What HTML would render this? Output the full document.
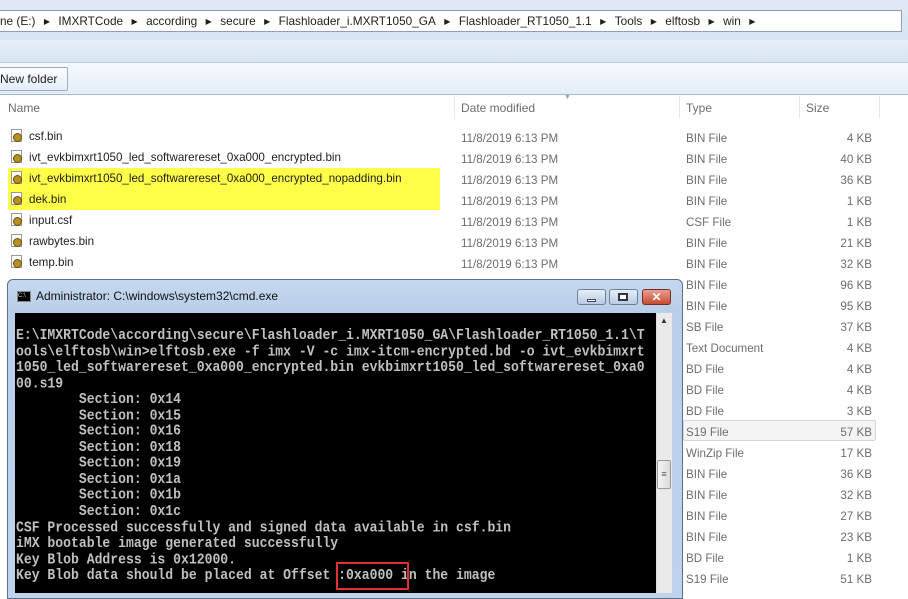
<!DOCTYPE html>
<html><head><meta charset="utf-8"><style>
*{margin:0;padding:0;box-sizing:border-box}
body{width:908px;height:589px;overflow:hidden;background:#fff;position:relative;font-family:"Liberation Sans",sans-serif;font-size:11.6px;color:#1e1e1e}
.a{position:absolute;white-space:nowrap}
.g{color:#6d6d6d}
.ic{position:absolute;width:11px;height:13px;border:1px solid #999;background:#fff}
.ic:after{content:"";position:absolute;left:1px;top:3px;width:7px;height:7px;border-radius:50%;background:#b89020;border:1px solid #6a5010}
.ar{display:inline-block;width:23px;text-align:center;font-size:8px;vertical-align:1px}
pre{font-family:"Liberation Mono",monospace;font-weight:bold;font-size:13.1px;line-height:16px;color:#c0c0c0;white-space:pre !important;transform:scaleY(1.1);transform-origin:0 0}
</style></head><body>
<div class="a" style="left:0;top:0;width:908px;height:62px;background:linear-gradient(#dfe9f5,#d5e2f1)"></div>
<div class="a" style="left:-2px;top:10px;width:904px;height:22px;background:#fff;border:1px solid #8e9fb5"></div>
<div class="a" style="left:0;top:14px;font-size:11.8px">ne (E:)<span class="ar">▶</span>IMXRTCode<span class="ar">▶</span>according<span class="ar">▶</span>secure<span class="ar">▶</span>Flashloader_i.MXRT1050_GA<span class="ar">▶</span>Flashloader_RT1050_1.1<span class="ar">▶</span>Tools<span class="ar">▶</span>elftosb<span class="ar">▶</span>win<span class="ar">▶</span></div>
<div class="a" style="left:0;top:40px;width:908px;height:23px;background:linear-gradient(#e6eef8,#d8e4f2);border-bottom:1px solid #bccbdd"></div>
<div class="a" style="left:0;top:63px;width:908px;height:32px;background:linear-gradient(#f6f9fd,#e3ecf7);border-bottom:1px solid #a8b9cf"></div>
<div class="a" style="left:-4px;top:67px;width:72px;height:24px;border:1px solid #9fb0c6;border-radius:2px;background:linear-gradient(#fbfdff,#e4edf8)"></div>
<div class="a" style="left:0;top:72px;font-size:12px">New folder</div>
<div class="a g" style="left:8px;top:101px;font-size:12px">Name</div>
<div class="a" style="left:454px;top:96px;width:1px;height:22px;background:#e3e8ee"></div>
<div class="a g" style="left:461px;top:101px;font-size:12px">Date modified</div>
<div class="a" style="left:564px;top:94px;color:#8ab;font-size:7px">▼</div>
<div class="a" style="left:679px;top:96px;width:1px;height:22px;background:#e3e8ee"></div>
<div class="a g" style="left:686px;top:101px;font-size:12px">Type</div>
<div class="a" style="left:799px;top:96px;width:1px;height:22px;background:#e3e8ee"></div>
<div class="a g" style="left:806px;top:101px;font-size:12px">Size</div>
<div class="a" style="left:879px;top:96px;width:1px;height:22px;background:#e3e8ee"></div>
<div class="a" style="left:8px;top:168px;width:432px;height:42px;background:#ffff4a"></div>
<div class="a" style="left:683px;top:420px;width:193px;height:21px;border:1px solid #d6d6d6;border-radius:2px;background:#f4f4f4"></div>

<div class="ic" style="left:11px;top:129px"></div><div class="a" style="left:29px;top:130px">csf.bin</div>
<div class="ic" style="left:11px;top:150px"></div><div class="a" style="left:29px;top:151px">ivt_evkbimxrt1050_led_softwarereset_0xa000_encrypted.bin</div>
<div class="ic" style="left:11px;top:171px"></div><div class="a" style="left:29px;top:172px">ivt_evkbimxrt1050_led_softwarereset_0xa000_encrypted_nopadding.bin</div>
<div class="ic" style="left:11px;top:192px"></div><div class="a" style="left:29px;top:193px">dek.bin</div>
<div class="ic" style="left:11px;top:213px"></div><div class="a" style="left:29px;top:214px">input.csf</div>
<div class="ic" style="left:11px;top:234px"></div><div class="a" style="left:29px;top:235px">rawbytes.bin</div>
<div class="ic" style="left:11px;top:255px"></div><div class="a" style="left:29px;top:256px">temp.bin</div>

<div class="a g" style="left:461px;top:128px;line-height:21px">11/8/2019 6:13 PM<br>11/8/2019 6:13 PM<br>11/8/2019 6:13 PM<br>11/8/2019 6:13 PM<br>11/8/2019 6:13 PM<br>11/8/2019 6:13 PM<br>11/8/2019 6:13 PM</div>
<div class="a g" style="left:686px;top:128px;line-height:21px">BIN File<br>BIN File<br>BIN File<br>BIN File<br>CSF File<br>BIN File<br>BIN File<br>BIN File<br>BIN File<br>SB File<br>Text Document<br>BD File<br>BD File<br>BD File<br>S19 File<br>WinZip File<br>BIN File<br>BIN File<br>BIN File<br>BIN File<br>BD File<br>S19 File</div>
<div class="a g" style="left:800px;width:72px;text-align:right;top:128px;line-height:21px">4 KB<br>40 KB<br>36 KB<br>1 KB<br>1 KB<br>21 KB<br>32 KB<br>96 KB<br>95 KB<br>37 KB<br>4 KB<br>4 KB<br>4 KB<br>3 KB<br>57 KB<br>17 KB<br>36 KB<br>32 KB<br>27 KB<br>23 KB<br>1 KB<br>51 KB</div>

<!-- cmd window -->
<div class="a" style="left:7px;top:279px;width:676px;height:320px;border:1px solid #5a6f8a;border-radius:6px 6px 0 0;background:linear-gradient(#c5d8ee,#b9cfe9 30px,#bed3ec)"></div>
<div class="a" style="left:17px;top:291px;width:14px;height:11px;background:#000;border:1px solid #888;color:#ccc;font-size:6px;line-height:9px">C:\</div>
<div class="a" style="left:36px;top:289px;font-size:12px;color:#111">Administrator: C:\windows\system32\cmd.exe</div>
<div class="a" style="left:577px;top:289px;width:29px;height:16px;border:1px solid #6c7f99;border-radius:3px;background:linear-gradient(#e6eef8,#b9cbe2)"></div>
<div class="a" style="left:587px;top:299px;width:9px;height:3px;background:#fff;border:1px solid #445"></div>
<div class="a" style="left:609px;top:289px;width:29px;height:16px;border:1px solid #6c7f99;border-radius:3px;background:linear-gradient(#e6eef8,#b9cbe2)"></div>
<div class="a" style="left:618px;top:293px;width:10px;height:8px;border:2px solid #334;background:#fff"></div>
<div class="a" style="left:642px;top:289px;width:29px;height:16px;border:1px solid #7a2a20;border-radius:3px;background:linear-gradient(#e8a090,#c84a30);color:#fff;font-weight:bold;font-size:12px;text-align:center;line-height:14px">✕</div>
<div class="a" style="left:15px;top:313px;width:641px;height:280px;background:#000"></div>
<div class="a" style="left:656px;top:313px;width:16px;height:280px;background:#eaeaea;border-left:1px solid #ddd"></div>
<div class="a" style="left:660px;top:316px;font-size:8px;color:#333">▲</div>
<div class="a" style="left:657px;top:460px;width:14px;height:29px;border:1px solid #999;border-radius:2px;background:linear-gradient(90deg,#f4f4f4,#dcdcdc);font-size:9px;text-align:center;line-height:27px;color:#555">≡</div>
<pre class="a" style="left:16px;top:328px;line-height:14.55px">E:\IMXRTCode\according\secure\Flashloader_i.MXRT1050_GA\Flashloader_RT1050_1.1\T
ools\elftosb\win&gt;elftosb.exe -f imx -V -c imx-itcm-encrypted.bd -o ivt_evkbimxrt
1050_led_softwarereset_0xa000_encrypted.bin evkbimxrt1050_led_softwarereset_0xa0
00.s19
        Section: 0x14
        Section: 0x15
        Section: 0x16
        Section: 0x18
        Section: 0x19
        Section: 0x1a
        Section: 0x1b
        Section: 0x1c
CSF Processed successfully and signed data available in csf.bin
iMX bootable image generated successfully
Key Blob Address is 0x12000.
Key Blob data should be placed at Offset :0xa000 in the image</pre>
<div class="a" style="left:336px;top:562px;width:73px;height:28px;border:2px solid #e03030"></div>
</body></html>
